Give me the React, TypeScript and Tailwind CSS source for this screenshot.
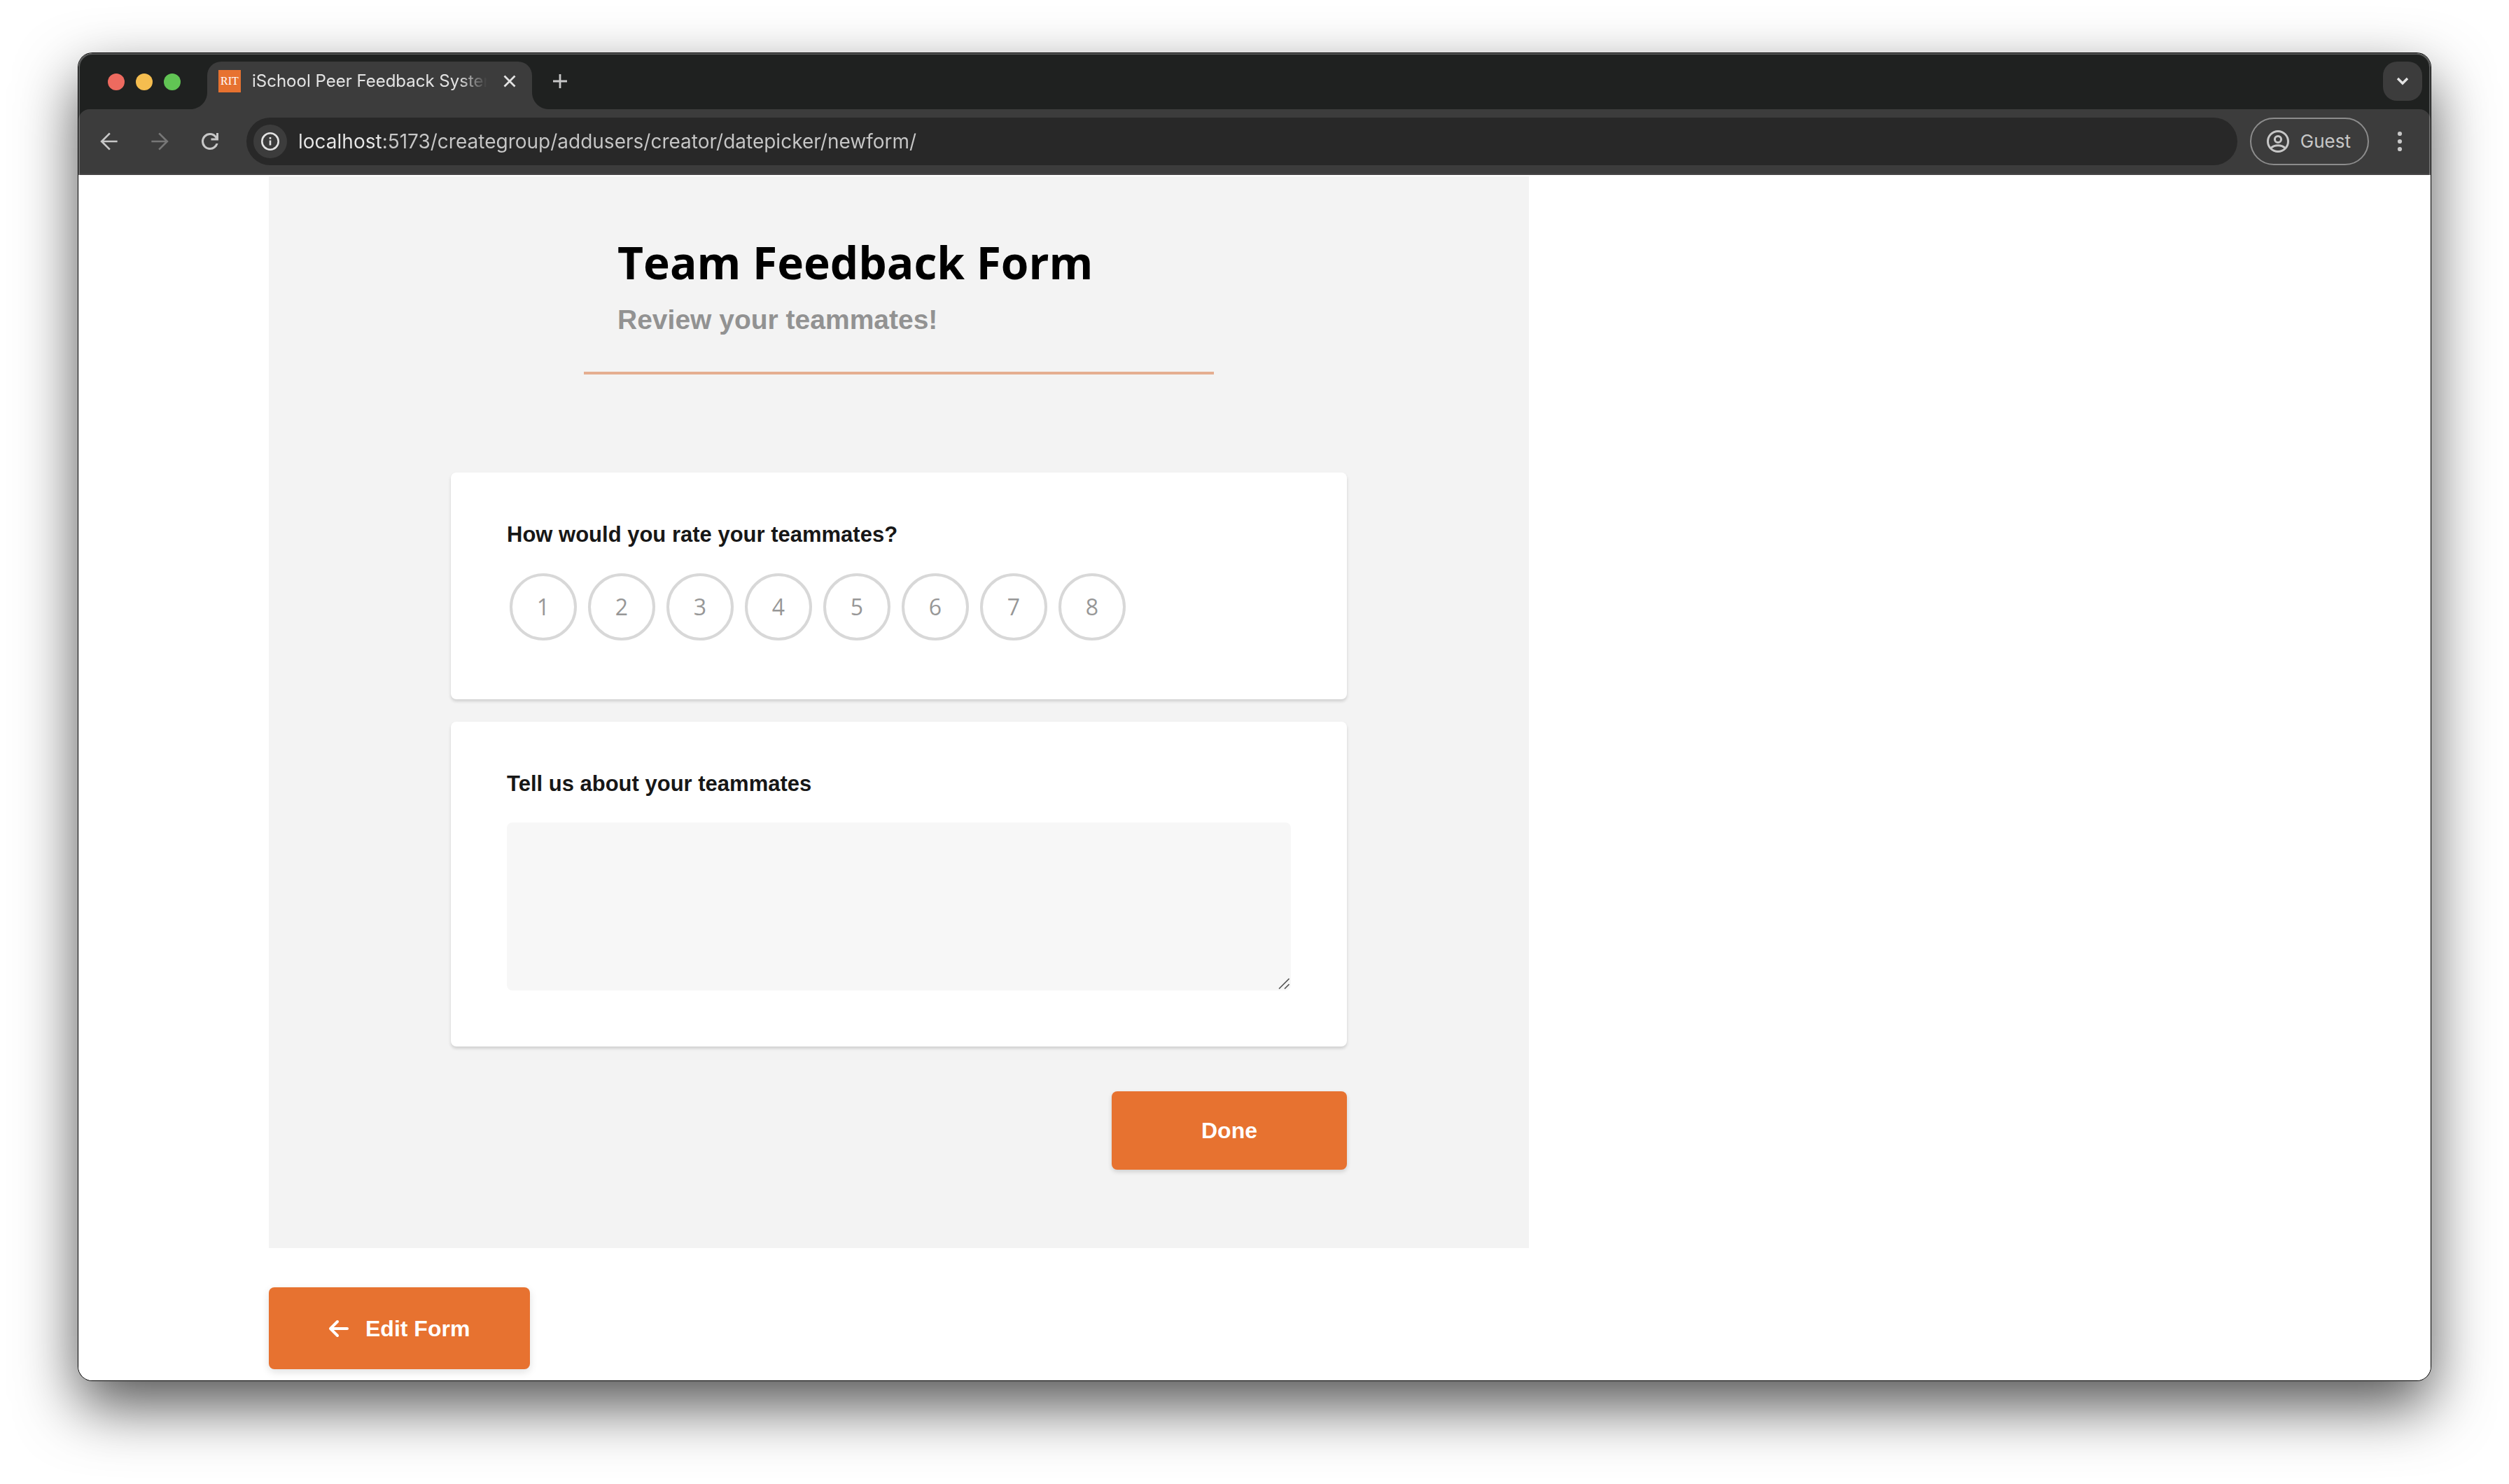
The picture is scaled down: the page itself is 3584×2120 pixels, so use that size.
import { useState } from "react";
import { FaArrowLeft } from "react-icons/fa6";

const RATINGS = [1, 2, 3, 4, 5, 6, 7, 8];

function TabFlare({ side }: { side: "left" | "right" }) {
  return (
    <svg viewBox="0 0 24 24" className="size-6 shrink-0 self-end text-[#3c3c3c]" aria-hidden="true">
      {side === "left" ? (
        <path d="M24 0v24H0C13.3 24 24 13.3 24 0Z" fill="currentColor" />
      ) : (
        <path d="M0 0v24h24C10.7 24 0 13.3 0 0Z" fill="currentColor" />
      )}
    </svg>
  );
}

function TabStrip() {
  return (
    <div className="flex h-20 items-center bg-[#1f2120] pr-3 pl-[42px]">
      <div className="flex w-[118px] shrink-0 items-center gap-4 pt-0.5">
        <button type="button" aria-label="Close window" className="size-6 rounded-full bg-[#ed6a5f]" />
        <button type="button" aria-label="Minimize window" className="size-6 rounded-full bg-[#f5bd4f]" />
        <button type="button" aria-label="Zoom window" className="size-6 rounded-full bg-[#61c454]" />
      </div>
      <TabFlare side="left" />
      <div className="flex w-[464px] shrink-0 items-start self-end rounded-t-[20px] bg-[#3c3c3c] px-4 pt-3 pb-6">
        <span className="flex size-8 shrink-0 items-center justify-center bg-[#e77230] font-['Liberation_Serif',serif] text-base leading-8 text-white">
          RIT
        </span>
        <span className="ml-4 h-8 min-w-0 flex-1 overflow-hidden text-2xl leading-8 whitespace-nowrap text-[#e3e3e3] [mask-image:linear-gradient(90deg,#000_88%,transparent)]">
          iSchool Peer Feedback System
        </span>
        <button type="button" aria-label="Close tab" className="ml-4 flex size-8 shrink-0 items-center justify-center text-[#e3e3e3]">
          <svg viewBox="0 0 32 32" className="size-8" fill="none" stroke="currentColor" strokeWidth="2.8">
            <path d="M8.5 8.5l15 15M23.5 8.5l-15 15" />
          </svg>
        </button>
      </div>
      <TabFlare side="right" />
      <button type="button" aria-label="New tab" className="flex size-8 shrink-0 items-center justify-center text-[#c7c7c7]">
        <svg viewBox="0 0 32 32" className="size-8" fill="none" stroke="currentColor" strokeWidth="2.8">
          <path d="M16 6v20M6 16h20" />
        </svg>
      </button>
      <button
        type="button"
        aria-label="Search tabs"
        className="ml-auto flex size-14 shrink-0 items-center justify-center rounded-[20px] bg-[#3c3c3c] text-[#e3e3e3]"
      >
        <svg viewBox="0 0 32 32" className="size-8" fill="none" stroke="currentColor" strokeWidth="3.4">
          <path d="M9 12l7 7 7-7" />
        </svg>
      </button>
    </div>
  );
}

function Toolbar() {
  const [url, setUrl] = useState("localhost:5173/creategroup/addusers/creator/datepicker/newform/");
  return (
    <div className="bg-[#1f2120]">
      <div className="flex h-[94px] items-center rounded-t-[16px] border-b-2 border-[#474546] bg-[#3c3c3c] pr-6 pl-5">
        <div className="flex shrink-0 items-center gap-6 text-[#c7c7c7]">
          <button type="button" aria-label="Back" className="flex size-12 items-center justify-center">
            <svg viewBox="0 0 48 48" className="size-10" fill="none" stroke="currentColor" strokeWidth="3.2">
              <path d="M38 24H12M25 10L11 24l14 14" />
            </svg>
          </button>
          <button type="button" aria-label="Forward" disabled className="flex size-12 items-center justify-center text-[#777777]">
            <svg viewBox="0 0 48 48" className="size-10" fill="none" stroke="currentColor" strokeWidth="3.2">
              <path d="M10 24h26M23 10l14 14-14 14" />
            </svg>
          </button>
          <button type="button" aria-label="Reload" className="flex size-12 items-center justify-center">
            <svg viewBox="0 0 24 24" className="size-9" fill="currentColor">
              <path d="M12 20q-3.35 0-5.675-2.325T4 12q0-3.35 2.325-5.675T12 4q1.725 0 3.3.712T18 6.75V4h2v7h-7V9h4.2q-.8-1.4-2.187-2.2T12 6Q9.5 6 7.75 7.75T6 12t1.75 4.25T12 18q1.925 0 3.475-1.1T17.65 14h2.1q-.7 2.65-2.85 4.325T12 20" />
            </svg>
          </button>
        </div>
        <div className="ml-7 flex h-[68px] min-w-0 flex-1 items-center rounded-full bg-[#282828] px-2.5 text-[#e3e3e3]">
          <button type="button" aria-label="View site information" className="flex size-12 shrink-0 items-center justify-center rounded-full bg-[#3c3c3c]">
            <svg viewBox="0 0 28 28" className="size-7" fill="none" stroke="currentColor" strokeWidth="2.6">
              <circle cx="14" cy="14" r="11.7" />
              <path d="M14 12.6v7M14 8v2.7" />
            </svg>
          </button>
          <input
            type="text"
            aria-label="Address"
            value={url}
            onChange={(e) => setUrl(e.target.value)}
            className="ml-4 min-w-0 flex-1 bg-[linear-gradient(90deg,#e8e8e8_120px,#c7c7c7_120px)] bg-clip-text text-[28px] leading-9 text-transparent caret-white outline-none"
          />
        </div>
        <button
          type="button"
          className="ml-[18px] flex h-[68px] shrink-0 items-center gap-4 rounded-full border-2 border-[#8c8c8c] pr-6 pl-[22px] text-[26px] leading-8 text-[#c7c7c7]"
        >
          <svg viewBox="0 0 32 32" className="size-8" fill="none" stroke="currentColor" strokeWidth="3">
            <circle cx="16" cy="16" r="14.5" />
            <circle cx="16" cy="13" r="4.6" />
            <path d="M5.6 25.6c6-5 14.8-5 20.8 0" />
          </svg>
          Guest
        </button>
        <button type="button" aria-label="Browser menu" className="ml-6 flex size-10 shrink-0 items-center justify-center text-[#c7c7c7]">
          <svg viewBox="0 0 40 40" className="size-10" fill="currentColor">
            <circle cx="20" cy="9" r="3.1" />
            <circle cx="20" cy="20" r="3.1" />
            <circle cx="20" cy="31" r="3.1" />
          </svg>
        </button>
      </div>
    </div>
  );
}

function FeedbackForm() {
  const [rating, setRating] = useState<number | null>(null);
  return (
    <form
      className="flex w-full max-w-[1800px] flex-col items-center bg-[#f3f3f3] px-20 pt-[83px] pb-28"
      onSubmit={(e) => e.preventDefault()}
    >
      <header className="w-full max-w-[900px] border-b-4 border-[#e5ae90] px-12 pb-[50px]">
        <h1 className="font-['Open_Sans',sans-serif] text-[64px] leading-[80px] font-bold text-black">Team Feedback Form</h1>
        <p className="mt-[18px] text-[39px] leading-[48px] font-bold text-[#929292]">Review your teammates!</p>
      </header>

      <div className="mt-[140px] flex w-full max-w-[1280px] flex-col gap-8">
        <section className="rounded-lg bg-white px-20 pt-[69px] pb-20 shadow-[0_3px_4px_rgba(0,0,0,0.15)]">
          <h2 id="rating-question" className="text-[31px] leading-10 font-bold text-[#171717]">
            How would you rate your teammates?
          </h2>
          <div role="radiogroup" aria-labelledby="rating-question" className="mt-[31px] flex flex-wrap gap-4 p-1">
            {RATINGS.map((n) => (
              <label
                key={n}
                className="relative flex size-24 cursor-pointer items-center justify-center rounded-full border-4 border-[#d8d8d8] font-['Open_Sans',sans-serif] text-[32px] leading-10 text-[#979797] has-checked:border-[#e77230] has-checked:text-[#e77230]"
              >
                <input
                  type="radio"
                  name="rating"
                  value={n}
                  checked={rating === n}
                  onChange={() => setRating(n)}
                  className="sr-only"
                />
                {n}
              </label>
            ))}
          </div>
        </section>

        <section className="rounded-lg bg-white px-20 pt-[69px] pb-20 shadow-[0_3px_4px_rgba(0,0,0,0.15)]">
          <label htmlFor="comments" className="block text-[31px] leading-10 font-bold text-[#171717]">
            Tell us about your teammates
          </label>
          <div className="relative mt-[35px]">
            <textarea
              id="comments"
              className="block h-60 w-full resize-none rounded-lg bg-[#f7f7f7] p-6 text-[32px] leading-10 text-[#171717] outline-none"
            />
            <svg
              viewBox="0 0 16 16"
              className="pointer-events-none absolute right-0.5 bottom-0.5 size-4 text-[#555555]"
              fill="none"
              stroke="currentColor"
              strokeWidth="1.6"
              aria-hidden="true"
            >
              <path d="M1 15.5L15.5 1M9 15.5L15.5 9" />
            </svg>
          </div>
        </section>

        <button
          type="submit"
          className="mt-8 h-28 self-end rounded-lg bg-[#e77230] px-32 text-[32px] leading-10 font-bold text-white shadow-[0_3px_6px_rgba(0,0,0,0.15)]"
        >
          Done
        </button>
      </div>
    </form>
  );
}

export default function App() {
  return (
    <div className="flex min-h-screen flex-col bg-white px-28 pt-[76px] pb-[148px] font-['Inter',sans-serif]">
      <div className="flex flex-1 flex-col rounded-[20px] shadow-[0_0_0_1px_#000,0_36px_86px_rgba(0,0,0,0.68)]">
        <div className="relative">
          <div className="overflow-hidden rounded-t-[20px]">
            <TabStrip />
            <Toolbar />
          </div>
          <div className="pointer-events-none absolute inset-0 rounded-t-[20px] border-x-2 border-t-2 border-white/25" />
        </div>
        <main className="flex flex-1 flex-col items-start rounded-b-[20px] bg-white px-[272px] pt-0.5 pb-4 font-['Liberation_Sans',Arial,sans-serif]">
          <FeedbackForm />
          <button
            type="button"
            className="mt-14 flex h-[117px] items-center gap-6 rounded-lg bg-[#e77230] px-[86px] text-[32px] leading-10 font-bold text-white shadow-[0_4px_12px_rgba(0,0,0,0.12)]"
          >
            <FaArrowLeft className="h-8 w-7" aria-hidden="true" />
            Edit Form
          </button>
        </main>
      </div>
    </div>
  );
}
